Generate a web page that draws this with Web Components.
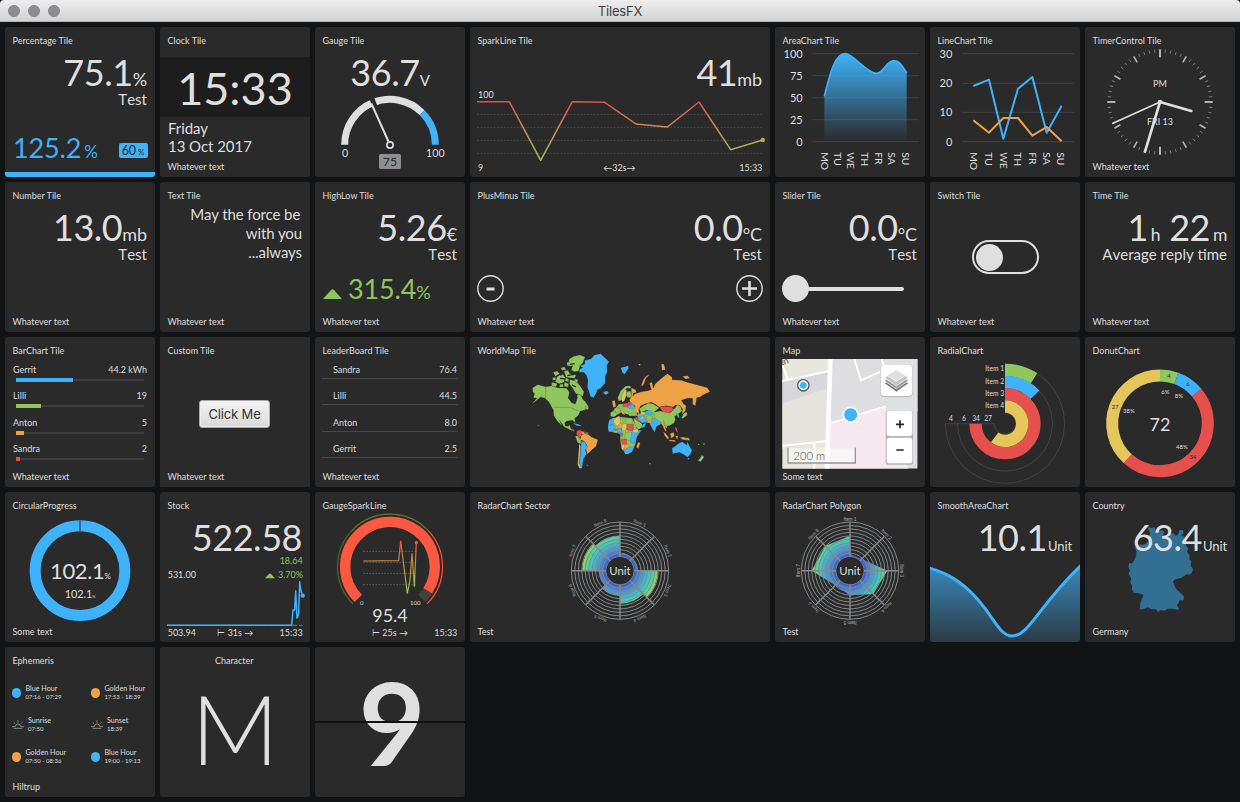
<!DOCTYPE html>
<html lang="en">
<head>
<meta charset="utf-8">
<title>TilesFX</title>
<style>
  html, body { margin: 0; height: 100%; background: #121315; }
  body {
    --fg: #dfdfdf; --tile: #2a2a2a; --blue: #3eb2fb; --green: #8fc65e;
    --orange: #eda245; --red: #e5504c; --yellow: #e5c65a; --gray: #8b9092;
    font-family: Lato, "Open Sans", sans-serif; color: var(--fg); overflow: hidden;
  }
</style>
</head>
<body>
<fx-window caption="TilesFX">
  <fx-tile heading="Percentage Tile"><fx-percentage></fx-percentage></fx-tile>
  <fx-tile heading="Clock Tile" note="Whatever text"><fx-clock></fx-clock></fx-tile>
  <fx-tile heading="Gauge Tile"><fx-gauge></fx-gauge><fx-value class="mid" value="36.7" unit="V" style="--unit:15px"></fx-value></fx-tile>
  <fx-tile heading="SparkLine Tile"><fx-sparkline></fx-sparkline><fx-value value="41" unit="mb"></fx-value></fx-tile>
  <fx-tile heading="AreaChart Tile"><fx-area-chart></fx-area-chart></fx-tile>
  <fx-tile heading="LineChart Tile"><fx-line-chart></fx-line-chart></fx-tile>
  <fx-tile heading="TimerControl Tile" note="Whatever text"><fx-timer></fx-timer></fx-tile>

  <fx-tile heading="Number Tile" note="Whatever text"><fx-value value="13.0" unit="mb" desc="Test"></fx-value></fx-tile>
  <fx-tile heading="Text Tile" note="Whatever text"><fx-prose><span>May the force be&thinsp;</span><span>with you</span><span>...always</span></fx-prose></fx-tile>
  <fx-tile heading="HighLow Tile" note="Whatever text"><fx-value value="5.26" unit="€" desc="Test"></fx-value><fx-trend></fx-trend></fx-tile>
  <fx-tile heading="PlusMinus Tile" note="Whatever text"><fx-value value="0.0" unit="°C" desc="Test"></fx-value><fx-stepper></fx-stepper></fx-tile>
  <fx-tile heading="Slider Tile" note="Whatever text"><fx-value value="0.0" unit="°C" desc="Test"></fx-value><fx-slider></fx-slider></fx-tile>
  <fx-tile heading="Switch Tile" note="Whatever text"><fx-switch></fx-switch></fx-tile>
  <fx-tile heading="Time Tile" note="Whatever text"><fx-duration></fx-duration></fx-tile>

  <fx-tile heading="BarChart Tile" note="Whatever text"><fx-list>
    <fx-bar name="Gerrit" value="44.2 kWh" style="--w:44.4%;--c:var(--blue)"></fx-bar>
    <fx-bar name="Lilli" value="19" style="--w:19.6%;--c:var(--green)"></fx-bar>
    <fx-bar name="Anton" value="5" style="--w:6%;--c:var(--orange)"></fx-bar>
    <fx-bar name="Sandra" value="2" style="--w:2.8%;--c:var(--red)"></fx-bar>
  </fx-list></fx-tile>
  <fx-tile heading="Custom Tile" note="Whatever text" class="square"><fx-button>Click Me</fx-button></fx-tile>
  <fx-tile heading="LeaderBoard Tile" note="Whatever text"><fx-list>
    <fx-leader name="Sandra" value="76.4"></fx-leader>
    <fx-leader name="Lilli" value="44.5"></fx-leader>
    <fx-leader name="Anton" value="8.0"></fx-leader>
    <fx-leader name="Gerrit" value="2.5"></fx-leader>
  </fx-list></fx-tile>
  <fx-tile heading="WorldMap Tile"><fx-world></fx-world></fx-tile>
  <fx-tile heading="Map" note="Some text"><fx-map></fx-map></fx-tile>
  <fx-tile heading="RadialChart"><fx-radial></fx-radial></fx-tile>
  <fx-tile heading="DonutChart"><fx-donut></fx-donut></fx-tile>

  <fx-tile heading="CircularProgress" note="Some text"><fx-progress></fx-progress></fx-tile>
  <fx-tile heading="Stock"><fx-stock></fx-stock><fx-value value="522.58" style="--right:8px"></fx-value></fx-tile>
  <fx-tile heading="GaugeSparkLine"><fx-gauge-spark></fx-gauge-spark></fx-tile>
  <fx-tile heading="RadarChart Sector" note="Test"><fx-radar-sector></fx-radar-sector></fx-tile>
  <fx-tile heading="RadarChart Polygon" note="Test"><fx-radar-polygon></fx-radar-polygon></fx-tile>
  <fx-tile heading="SmoothAreaChart"><fx-smooth></fx-smooth><fx-value value="10.1" unit="Unit" style="--unit:13px;--gap:1px"></fx-value></fx-tile>
  <fx-tile heading="Country" note="Germany"><fx-country></fx-country><fx-value value="63.4" unit="Unit" style="--unit:13px;--gap:1px"></fx-value></fx-tile>

  <fx-tile heading="Ephemeris" note="Hiltrup"><fx-ephemeris>
    <fx-hour name="Blue Hour" time="07:16 - 07:29" kind="blue"></fx-hour>
    <fx-hour name="Golden Hour" time="17:53 - 18:39" kind="orange"></fx-hour>
    <fx-hour name="Sunrise" time="07:50" kind="sun"></fx-hour>
    <fx-hour name="Sunset" time="18:39" kind="sun"></fx-hour>
    <fx-hour name="Golden Hour" time="07:50 - 08:36" kind="orange"></fx-hour>
    <fx-hour name="Blue Hour" time="19:00 - 19:13" kind="blue"></fx-hour>
  </fx-ephemeris></fx-tile>
  <fx-tile heading="Character" class="centered"><fx-character></fx-character></fx-tile>
  <fx-tile><fx-flip></fx-flip></fx-tile>
</fx-window>

<script>
const define = (name, css, html) => customElements.define(name, class extends HTMLElement {
  constructor() {
    super();
    const t = document.createElement('template');
    const body = typeof html === 'function' ? html(k => this.getAttribute(k) || '') : html;
    t.innerHTML = `<style>:host{display:block;box-sizing:border-box}*{box-sizing:border-box}${css}</style>${body}`;
    this.attachShadow({ mode: 'open' }).append(t.content.cloneNode(true));
  }
});
// Drawings use three units per pixel; the box is the tile rectangle in those units.
const chart = (name, x, y, w, markup) => define(name,
  'svg{display:block;width:100%;height:100%}text{fill:var(--fg);font-size:27px}.m{text-anchor:middle}.e{text-anchor:end}',
  `<svg viewBox="${x} ${y} ${w} 450">${markup}</svg>`);
const polar = (cx, cy, r, a) => {
  const t = a * Math.PI / 180;
  return (cx + r * Math.sin(t)).toFixed(2) + ' ' + (cy - r * Math.cos(t)).toFixed(2);
};
const arc = (cx, cy, r, a, b) => `M${polar(cx, cy, r, a)}A${r} ${r} 0 ${b - a > 180 ? 1 : 0} 1 ${polar(cx, cy, r, b)}`;
const ring = (cx, cy, r, a, b, w, c) => `<path d="${arc(cx, cy, r, a, b)}" fill="none" stroke="${c}" stroke-width="${w}"/>`;
const label = (s, x, y, cls = '', extra = '') => `<text x="${x}" y="${y}" class="${cls}" ${extra}>${s}</text>`;

define('fx-window', `
  :host{display:flex;flex-direction:column;width:1240px;height:802px}
  header{height:22px;display:grid;grid-template-columns:1fr auto 1fr;align-items:center;flex:none;
    background:linear-gradient(#eee,#d2d2d2);border-bottom:1px solid #b4b6b8;border-radius:4px 4px 0 0;
    font:13px/20px Inter,"Liberation Sans",sans-serif;letter-spacing:-.2px;color:#404040}
  .dots{display:flex;gap:8px;padding-left:8px}
  i{width:12px;height:12px;border-radius:50%;background:#8f8d92;border:1px solid #858388}
  main{display:grid;padding:5px;gap:5px;grid-template-columns:repeat(3,150px) 300px repeat(3,150px);grid-template-rows:repeat(5,150px)}`,
  a => `<header><div class="dots"><i></i><i></i><i></i></div><span>${a('caption')}</span></header><main><slot></slot></main>`);

define('fx-tile', `
  :host{display:grid;grid-template:minmax(0,1fr)/minmax(0,1fr);background:var(--tile);border-radius:3px;overflow:hidden}
  :host(.square){border-radius:0}
  :host(.centered) .frame{text-align:center;padding-right:9px}
  .frame,::slotted(*){grid-area:1/1}
  .frame{display:flex;flex-direction:column;justify-content:space-between;padding:7.500px 7.500px 5px;font-size:9px;line-height:11px}`,
  a => `<slot></slot><div class="frame"><span>${a('heading')}</span><span>${a('note')}</span></div>`);

define('fx-value', `
  :host{padding:27px var(--right,8px) 0 0;text-align:right}
  :host(.mid){padding-right:0;text-align:center}
  div{font-size:36px;line-height:36px;height:36px;white-space:nowrap;letter-spacing:-.45px}
  small{font-size:var(--unit,18px);line-height:1;margin-left:var(--gap,0);letter-spacing:-.1px}
  p{margin:0;font-size:15px;line-height:18px;font-kerning:none}`,
  a => `<div>${a('value')}<small>${a('unit')}</small></div><p>${a('desc')}</p>`);

define('fx-duration', `
  :host{padding:27px 8px 0 0;text-align:right}
  div{font-size:36px;line-height:36px;height:36px;white-space:nowrap;letter-spacing:-.45px}
  small{font-size:17.500px;line-height:1;margin-left:3px}b{font-weight:400;margin-left:9px}
  p{margin:0;font-size:15px;line-height:18px;font-kerning:none}`,
  `<div>1<small>h</small><b>22</b><small>m</small></div><p>Average reply time</p>`);

define('fx-percentage', `
  :host{display:flex;flex-direction:column}
  fx-value{flex:1}
  .row{display:flex;align-items:center;justify-content:space-between;padding:0 7.500px 9px 8px;color:var(--blue);font-size:27px;line-height:30px;letter-spacing:-.15px}
  small{font-size:17px;line-height:1;margin-left:3px}
  .pill{display:flex;align-items:baseline;background:var(--blue);color:var(--tile);border-radius:2px;height:15px;width:29px;justify-content:center;font-size:12.500px;line-height:15px;margin-top:5px}
  .pill small{font-size:8px;margin-left:2px}
  .bar{height:5.500px;background:var(--blue)}`,
  `<fx-value value="75.1" unit="%" desc="Test"></fx-value>
   <div class="row"><span>125.2<small>%</small></span><span class="pill">60<small>%</small></span></div><div class="bar"></div>`);

define('fx-clock', `
  .band{margin-top:30px;height:60px;background:#1d1d1d;text-align:center;font-size:45px;line-height:62px}
  p{margin:0;padding:2px 8px;font-size:15px;line-height:18px;letter-spacing:-.05px}`,
  `<div class="band">15:33</div><p>Friday<br>13 Oct 2017</p>`);

define('fx-prose', `:host{display:flex;flex-direction:column;align-items:flex-end;padding:23px 8px 0 0;font-size:15px;line-height:19px;letter-spacing:-.1px;white-space:pre}`, `<slot></slot>`);

define('fx-trend', `
  :host{display:flex;align-items:baseline;gap:6px;padding:91px 0 0 8px;color:var(--green);font-size:27px;line-height:32px;letter-spacing:-.15px}
  svg{width:19px;height:10px}small{font-size:18px;line-height:1}`,
  `<svg viewBox="0 0 19 10"><path d="M0 10 8 1q1.500-1.500 3 0l8 9z" fill="currentColor"/></svg><span>315.4<small>%</small></span>`);

define('fx-stepper', `
  :host{display:flex;justify-content:space-between;align-items:flex-start;padding:93px 7px 0}
  svg{width:27px;height:27px;display:block}`,
  ['<path d="M9.500 14h8"/>', '<path d="M6 13.500h15M13.500 6v15"/>'].map((p, i) =>
  `<svg viewBox="0 0 27 27" fill="none" stroke="#dfdfdf"><circle cx="13.500" cy="13.500" r="12.700" stroke-width="1.400"/><g stroke-width="${i ? 2.6 : 3}">${p}</g></svg>`).join(''));

define('fx-slider', `
  :host{display:flex;align-items:center;padding:93px 21px 0 7px;height:120px}
  i{width:27px;height:27px;border-radius:50%;background:var(--fg)}
  b{flex:1;height:4px;background:var(--fg);border-radius:0 2px 2px 0;margin-left:-1px}`, `<i></i><b></b>`);

define('fx-switch', `
  :host{display:grid;place-items:center}
  div{width:67px;height:34px;border:2px solid var(--fg);border-radius:17px;padding:2px;display:flex;align-items:center}
  i{width:27px;height:27px;border-radius:50%;background:var(--fg)}`, `<div><i></i></div>`);

define('fx-list', `:host{display:flex;flex-direction:column;padding:27px 8px 0}`, `<slot></slot>`);
define('fx-bar', `
  :host{height:26.300px;font-size:9px;line-height:11px}
  p{display:flex;justify-content:space-between;margin:0 0 3px}
  .t{height:4px;margin:0 3px;background:linear-gradient(#3e3e3e,#3e3e3e) 0 1px/100% 2px no-repeat}
  .t i{display:block;height:4px;width:var(--w);background:var(--c)}`,
  a => `<p><span>${a('name')}</span><span>${a('value')}</span></p><div class="t"><i></i></div>`);
define('fx-leader', `
  :host{height:26.300px;font-size:9px;line-height:11px}
  p{display:flex;justify-content:space-between;margin:0 -1px;padding:0 1px 3px 11px;border-bottom:1px solid #484848}`,
  a => `<p><span>${a('name')}</span><span>${a('value')}</span></p>`);

define('fx-button', `
  :host{display:grid;place-items:center;padding:3px 1px 0 0}
  span{display:grid;place-items:center;width:71px;height:28px;border:1px solid #aaa;border-radius:3px;
   background:linear-gradient(#f4f4f4,#d9d9d9);box-shadow:inset 0 0 0 1px #eee;color:#333;font:13px Inter,"Liberation Sans",sans-serif;letter-spacing:-.15px}`,
  `<span><slot></slot></span>`);

define('fx-ephemeris', `:host{display:grid;grid-template-columns:79px 1fr;grid-auto-rows:32px;align-content:start;padding:38px 0 0 7px}`, `<slot></slot>`);
define('fx-hour', `
  :host{display:flex;gap:4px;font-size:7.200px;line-height:8px;white-space:nowrap}
  i{width:9.400px;height:9.400px;border-radius:50%;margin-top:3.300px;flex:none}
  svg{width:12px;height:10px;margin-top:3px;flex:none}
  div{display:flex;flex-direction:column}small{font-size:6px;line-height:8px}`,
  a => (a('kind') === 'sun'
    ? `<svg viewBox="0 0 36 30" fill="none" stroke="#b9b9b9" stroke-width="2"><path d="M0 20h9M27 20h9M5 25h26M10 20a8 8 0 1 1 16 0M18 8V1M9 11 5 7M27 11l4-4"/></svg>`
    : `<i style="background:var(--${a('kind')})"></i>`) + `<div><span>${a('name')}</span><small>${a('time')}</small></div>`);

define('fx-character', `:host{text-align:center;font-size:97px;font-weight:300;line-height:116px;padding-top:23px}`, `M`);
define('fx-flip', `
  :host{display:grid;grid-template:150px/150px}
  span{grid-area:1/1;text-align:center;font-size:115px;font-weight:700;line-height:148px;padding-left:4px;height:150px}
  i{grid-area:1/1;align-self:start;margin-top:74px;height:2px;background:#111}`, `<span>9</span><i></i>`);

chart('fx-gauge', 9, 21, 450,
  ring(234, 374, 136, -90, 45, 21, '#dfdfdf') + ring(234, 374, 136, 45, 90, 21, 'var(--blue)') +
  `<path d="M216 334 176 225" stroke="#2a2a2a" stroke-width="15"/><path d="M230 366 178 250" stroke="#dfdfdf" stroke-width="6"/>
   <circle cx="234" cy="375" r="9.500" fill="#2a2a2a" stroke="#dfdfdf" stroke-width="5"/>
   <rect x="201" y="402" width="66" height="45" rx="5" fill="#8b9092"/>` +
  label('0', 99, 410, 'm', 'style="font-size:32px"') + label('100', 370, 410, 'm', 'style="font-size:32px"') +
  label('75', 234, 438, 'm', 'style="font-size:37px;fill:#2a2a2a"'));

chart('fx-sparkline', 474, 21, 900,
  `<defs><linearGradient id="g" gradientUnits="userSpaceOnUse" x1="0" y1="245" x2="0" y2="421"><stop offset="0" stop-color="#e5504c"/><stop offset=".4" stop-color="#cf874d"/><stop offset="1" stop-color="#8fc65e"/></linearGradient></defs>
   <path d="M495 283H1350M495 322H1350M495 361H1350M495 400H1350" stroke="#4d4d4d" stroke-width="2.500" stroke-dasharray="6 4"/>
   <path d="M495 245 592 245.100 686 421 781 245 878 247 972 312 1066 321 1161 246 1256 389 1352 360" fill="none" stroke="url(#g)" stroke-width="4.500" stroke-linejoin="round"/>
   <circle cx="1352" cy="360" r="7" fill="#b8ab57"/>` +
  label('100', 498, 233) + label('9', 498, 452) + label('←32s→', 922, 452, 'm') + label('15:33', 1351, 452, 'e'));

const days = ['MO', 'TU', 'WE', 'TH', 'FR', 'SA', 'SU'];
const axis = (x0, x1, ys, names, tx, xs) =>
  ys.map(y => `<path d="M${x0} ${y}H${x1}" stroke="#3c3c3c" stroke-width="4"/>`).join('') +
  names.map((n, i) => label(n, tx, ys[i] + 12, 'e', 'style="font-size:33px"')).join('') +
  xs.map((x, i) => label(days[i], 0, 0, '', `transform="translate(${x - 11} 397) rotate(90)" style="font-size:31px;letter-spacing:-.5px"`)).join('');
const areaCurve = 'M163 229C180 160 195 101 225 101C250 101 290 160 320 160C340 160 350 122 371 122C390 122 398 140 410 159';
chart('fx-area-chart', 15, 21, 450,
  `<defs><linearGradient id="g" x1="0" y1="0" x2="0" y2="1"><stop offset="0" stop-color="#3eb2fb"/><stop offset="1" stop-color="#3eb2fb" stop-opacity="0"/></linearGradient></defs>` +
  axis(127, 447, [101, 167, 233, 299, 365], ['100', '75', '50', '25', '0'], 98, [163, 204, 243, 285, 327, 366, 408]) +
  `<path d="${areaCurve}V365H163Z" fill="url(#g)"/><path d="${areaCurve}" fill="none" stroke="#3eb2fb" stroke-width="5"/>`);
chart('fx-line-chart', 480, 21, 450,
  axis(577, 911, [101, 190, 277, 365], ['30', '20', '10', '0'], 547, [612, 656, 700, 744, 787, 830, 873]) +
  `<g fill="none" stroke-width="6" stroke-linejoin="round"><path stroke="#3eb2fb" d="M610 198 657 179 700 356 744 206 787 171 830 338 875 257"/>
   <path stroke="#eda245" d="M610 301 657 338 700 294 744 294 787 347 830 321 875 364"/></g>`);

let ticks = '';
for (let i = 0; i < 60; i++) {
  const q = i % 15 === 0, h = i % 5 === 0;
  ticks += `<path d="M${polar(1170, 246, 158, i * 6)}L${polar(1170, 246, q ? 134 : h ? 137 : 148, i * 6)}" stroke="${h ? '#b4b4b4' : '#8d8d8d'}" stroke-width="${q ? 6 : h ? 5 : 2.5}"/>`;
}
chart('fx-timer', 945, 21, 450, ticks + label('PM', 1170, 200, 'm') + label('FRI 13', 1170, 314, 'm') +
  `<g stroke="#dfdfdf" stroke-linecap="round"><path d="M1170 246 1264 273" stroke-width="8"/><path d="M1170 246 1125 395" stroke-width="8"/><path d="M1170 246 1029 310" stroke-width="5"/></g><circle cx="1170" cy="246" r="7" fill="#dfdfdf"/>`);

const under = [
  'M428 250 450 246 486 250 496 268 502 286 514 286 500 306 496 328 484 352 466 358 460 344 452 326 450 296 428 292 414 286 414 270Z',
  'M432 226 446 208 484 204 504 226 500 240 482 240 466 236 454 232 436 242 422 244 424 232Z',
  'M500 240 520 230 600 232 614 258 590 274 576 264 556 276 540 264 524 262 508 250Z'
];
const lands = {
  '#8fc65e': [
    'M188 158 203 149 227 155 245 153 262 158 290 160 298 172 295 188 305 203 316 208 322 190 322 176 334 182 338 193 346 200 356 215 345 224 330 229 326 240 314 250 316 264 308 256 290 258 284 264 286 273 295 274 299 269 302 280 310 288 300 284 282 275 268 255 276 273 262 258 252 243 250 225 244 214 236 200 225 190 212 186 193 202 186 206 201 190 190 188 194 176 188 170Z',
    'M298 72 312 64 330 60 345 66 338 84 330 92 326 108 312 110 304 104 308 92 294 94Z', 'M300 134 318 138 330 152 342 170 338 184 326 178 318 176 308 160 298 146Z',
    'M262 124 278 118 286 128 282 142 268 146 256 140Z', 'M250 112 262 108 268 116 256 124Z', 'M282 108 294 106 300 116 318 120 314 130 298 128 288 126Z', 'M284 142 296 146 294 156 282 154ZM272 98 284 96 288 104 276 106ZM346 214 356 216 354 224 346 222Z',
    'M248 128 256 126 258 134 248 136ZM290 84 298 78 300 88 292 92ZM246 142 262 146 258 156 244 152ZM286 128 296 132 296 140 286 138ZM270 148 280 148 280 156 268 156ZM314 132 324 134 322 142 314 140Z',
    'M316 303 324 303 333 315 332 328 322 322Z', 'M443 188 452 168 466 154 480 152 484 160 470 160 458 178 454 196 446 198Z', 'M422 232 436 230 440 240 432 246 422 244ZM434 220 446 218 452 228 444 234 432 230Z', 'M446 207 456 208 457 220 448 220Z',
    'M475 236 498 234 502 242 478 243Z', 'M450 252 462 250 462 270 450 266ZM466 252 486 250 488 268 468 268Z', 'M490 250 500 252 516 266 518 276 504 284 496 272Z', 'M466 292 484 292 490 306 482 320 464 312Z',
    'M507 222 520 212 536 204 548 206 558 212 568 218 556 228 548 234 530 226 514 232Z',
    'M556 230 572 228 600 234 616 218 622 208 632 216 636 228 624 238 614 244 616 254 612 264 598 272 584 272 574 262 556 256 552 242Z',
    'M530 244 544 240 548 250 536 260 530 256ZM640 236 650 230 652 240 640 250 634 250ZM644 308 656 308 660 316 646 316ZM696 360 702 366 692 380 684 378Z', 'M470 170 482 168 484 186 474 188 468 182Z'
  ],
  '#eda245': [
    'M484 158 496 164 500 172 490 174 488 184 496 176 514 170 530 168 544 164 538 144 546 142 550 160 556 146 572 132 592 116 606 126 606 134 634 136 646 140 682 150 712 158 720 170 702 178 690 186 680 188 676 212 668 208 668 190 652 190 634 196 640 206 648 212 646 228 636 238 638 222 628 210 616 210 610 216 588 212 568 216 556 208 544 202 526 206 512 212 506 224 508 236 498 232 488 226 496 214 482 204 478 196 484 182Z',
    'M514 150 520 134 528 124 540 118 528 130 522 146 516 154ZM574 86 582 88 586 104 576 106ZM638 124 652 122 660 130 646 132ZM504 88 512 86 510 93Z',
    'M334 300 344 294 354 298 364 306 384 314 378 334 366 344 352 358 348 342 352 334 342 318 330 314Z', 'M426 198 434 196 438 214 430 218ZM450 226 458 226 466 240 458 238Z',
    'M430 284 446 284 444 292 432 292ZM446 262 458 268 456 284 442 278ZM460 328 472 326 480 336 470 342 462 346Z', 'M504 322 511 324 505 341 499 336Z', 'M530 262 548 248 552 256 544 266Z',
    'M570 262 580 264 586 276 590 290 584 286 578 272ZM580 290 588 296 598 310 592 312 584 302ZM600 296 610 292 614 302 604 310ZM616 304 624 302 622 314ZM628 308 642 306 654 314 640 314ZM596 314 616 316 616 320 598 318Z', 'M330 288 344 290 342 298 332 296Z'
  ],
  '#3eb2fb': [
    'M345 76 362 72 374 60 392 56 402 66 417 80 410 92 412 110 406 122 405 145 392 160 382 164 378 176 370 188 362 185 357 170 352 156 354 136 350 122 342 112 328 112 328 104 338 98 330 92 344 88Z',
    'M401 170 413 168 416 174 408 179 401 176Z', 'M452 98 462 96 474 92 476 100 464 118 458 114Z', 'M334 318 344 320 352 336 346 346 350 356 340 372 336 400 330 398 328 382 332 352Z',
    'M418 254 428 250 432 262 424 272 414 270ZM414 272 430 266 438 278 428 290 416 290ZM440 282 454 280 456 294 442 294Z', 'M462 344 480 336 494 334 486 350 474 358 464 354Z', 'M486 286 512 286 500 306 494 326 480 322 484 304Z',
    'M502 244 524 242 530 262 516 264 504 254ZM524 230 540 226 550 238 534 240 522 236ZM468 206 490 208 496 220 478 222Z',
    'M546 252 556 250 572 262 572 268 560 274 554 292 546 280 540 268Z', 'M606 340 616 334 624 326 636 320 642 324 650 330 652 320 660 336 666 346 660 360 652 366 640 358 628 352 608 356ZM652 368 658 370 655 375ZM618 236 626 236 628 248 624 248Z', 'M308 264 326 268 336 274 320 272Z', 'M520 266 528 264 524 276 512 280Z'
  ],
  '#e5504c': ['M568 216 584 214 606 216 612 224 596 234 578 230Z', 'M320 288 332 284 336 300 328 308 320 300Z', 'M344 292 356 292 352 300ZM305 280 314 286 310 290Z', 'M470 268 490 268 492 284 480 288 470 284Z', 'M454 312 470 312 470 328 456 328Z', 'M458 208 472 204 474 216 460 216Z', 'M496 244 508 254 506 260 496 254ZM430 282 440 284 436 288ZM450 296 458 294 458 304 452 304Z', 'M614 276 620 278 624 294 618 288Z', 'M474 200 484 202 482 212 474 210Z', 'M500 234 510 234 510 238Z'],
  '#e5c65a': ['M432 252 448 242 452 262 442 274 430 262Z', 'M456 268 470 266 468 286 456 288Z', 'M454 330 464 328 460 348 454 340Z', 'M328 324 332 334 331 354 327 384 334 400 328 400 323 388 326 350Z', 'M456 180 464 164 470 166 468 184 464 196 458 202 454 194Z', 'M512 228 526 234 524 240 512 238ZM488 284 504 282 504 294 490 292ZM580 256 586 268 592 276 588 280ZM468 284 476 288 466 292Z', 'M510 250 518 244 522 248 514 254Z']
};
chart('fx-world', 0, 6, 900, `<path fill="#8fc65e" d="${under.join('')}"/>` + Object.entries(lands).map(([c, p]) =>
  `<path fill="${c}" stroke="#2a2a2a" stroke-opacity=".4" stroke-width="1.200" stroke-linejoin="round" d="${p.join('')}"/>`).join('') +
  `<path d="M227 155V190M252 217H300L326 228" stroke="#2a2a2a" stroke-opacity=".5" stroke-width="1.500" fill="none"/>
   <g stroke="#2a2a2a" stroke-width="4" fill="none"><path d="M292 122 312 118M270 130 286 132M306 150 318 156M300 88 314 86M272 112V122"/></g>
   <path d="M294 188 306 178 318 186 314 204 304 202Z" fill="#2a2a2a"/>
   <g fill="#8fc65e"><circle cx="686" cy="328" r="2"/><circle cx="702" cy="327" r="2"/><circle cx="540" cy="386" r="2"/></g><path d="M203 270l4 3M350 390l4 2" stroke="#3eb2fb" stroke-width="2"/>`);

chart('fx-map', 0, 6, 450,
  `<defs><clipPath id="c"><rect x="22" y="72" width="406" height="329"/></clipPath></defs><g clip-path="url(#c)">
   <rect x="22" y="72" width="406" height="329" fill="#dedddf"/>
   <path d="M22 72H168L150 401H22Z" fill="#e8e7dc"/><path d="M22 136 162 108 158 160 22 206Z" fill="#d7d7dc"/>
   <path d="M22 206 158 160 152 320 22 342Z" fill="#e5e3dc"/>
   <path d="M164 266 332 212 340 250 400 401H160Z" fill="#f5e8ef"/><path d="M330 72H428V230H335Z" fill="#dfe0e4"/>
   <path d="M168 72 155 401M238 72 258 136 330 104 320 72M162 266 332 214M22 138 164 108M22 332 160 318M38 132 22 90M118 320V401" fill="none" stroke="#fff" stroke-width="6"/>
   <path d="M166 72 156 401" stroke="#fff" stroke-width="14"/>
   <text x="14" y="94" transform="rotate(-18 14 94)" style="font-size:28px;fill:#5d4d45">en</text>
   <circle cx="85" cy="151" r="17" fill="#f7f7f7" stroke="#555a60" stroke-width="4"/><circle cx="85" cy="151" r="10" fill="#3eb2fb"/>
   <circle cx="227" cy="239" r="22" fill="#3eb2fb" stroke="#fff" stroke-width="5"/>
   <rect x="315" y="89" width="99" height="98" rx="13" fill="#bdbdc0"/><rect x="317" y="89" width="95" height="94" rx="12" fill="#fff"/>
   <g stroke="#fff" stroke-width="2"><path d="M364 122 401 145 364 171 328 145Z" fill="#777"/><path d="M364 114 401 137 364 162 328 137Z" fill="#999"/><path d="M364 106 401 128 364 153 328 128Z" fill="#c4c4c4"/><path d="M364 104 392 121 364 139 336 121Z" fill="#e0e0e0"/></g>
   <rect x="332" y="227" width="82" height="162" rx="8" fill="#b5b4b7"/><rect x="335" y="227" width="77" height="76" rx="8" fill="#fff"/><rect x="335" y="308" width="77" height="77" rx="8" fill="#fff"/>
   <path d="M363 268H387M375 256V280M364 345H386" stroke="#222" stroke-width="5"/>
   <rect x="39" y="340" width="202" height="44" fill="#fff" opacity=".5"/><path d="M39 338V384H241V338" fill="none" stroke="#969696" stroke-width="4"/>
   <text x="55" y="374" style="font-size:34px;font-weight:300;fill:#555">200 m</text></g>`);

const C8 = [690, 266];
chart('fx-radial', 465, 6, 450,
  `<g>${[179, 142.5].map(r => ring(...C8, r, 0, 270, 3, '#434343')).join('')}${ring(...C8, 32, 0, 270, 3, '#434343')}<path d="M510 266H659" stroke="#434343" stroke-width="3"/></g>` +
  ring(...C8, 161.5, 0, 32.6, 37, 'var(--green)') + ring(...C8, 125, 0, 46, 37, 'var(--blue)') +
  ring(...C8, 88.5, 0, 270, 37, 'var(--red)') + ring(...C8, 51.5, 0, 217, 37, 'var(--yellow)') +
  [108, 147, 183, 219].map((y, i) => label('Item ' + (i + 1), 687, y, 'e', 'style="font-size:20px"')).join('') +
  [[528, 4], [567, 6], [603, 34], [639, 27]].map(([x, s]) => label(s, x, 259, 'm', 'style="font-size:20px"')).join(''));

const C9 = [1155, 265];
chart('fx-donut', 930, 6, 450,
  ring(...C9, 143.5, 0, 20, 36, 'var(--green)') + ring(...C9, 143.5, 20, 50, 36, 'var(--blue)') +
  ring(...C9, 143.5, 50, 222.4, 36, 'var(--red)') + ring(...C9, 143.5, 222.4, 360, 36, 'var(--yellow)') +
  [[4, 1182, 129], [6, 1239, 154], [34, 1254, 373], [27, 1021, 221]].map(([s, x, y]) => label(s, x, y, 'm', 'style="font-size:18px;fill:#2a2a2a"')).join('') +
  [['6%', 1171, 176], ['8%', 1212, 190], ['38%', 1062, 235], ['48%', 1221, 343]].map(([s, x, y]) => label(s, x, y, 'm', 'style="font-size:18px"')).join('') +
  label('72', 1155, 287, 'm', 'style="font-size:54px"'));

chart('fx-progress', 15, 6, 450,
  `<circle cx="240" cy="242" r="134.500" fill="none" stroke="#3eb2fb" stroke-width="33"/><path d="M240 91V125" stroke="#3c6683" stroke-width="6"/>` +
  `<text x="241" y="266" class="m" style="font-size:66px;letter-spacing:-1px">102.1<tspan style="font-size:24px">%</tspan></text>` +
  `<text x="240" y="324" class="m" style="font-size:33px;letter-spacing:-.5px">102.1<tspan style="font-size:12px">%</tspan></text>`);

chart('fx-stock', 480, 6, 450,
  `<path d="M501 406H908" stroke="#8a8a8a" stroke-width="2.500" stroke-dasharray="12 6"/>
   <path d="M501 406H875L879 360H884L887 302 891 385 896 372 899 275 903 303 908 317" fill="none" stroke="#3eb2fb" stroke-width="4.500" stroke-linejoin="round"/>
   <circle cx="908" cy="317" r="6.500" fill="#3eb2fb"/><path d="M795 265 807 252q3-3 6 0l12 13z" fill="#8fc65e"/>` +
  label('18.64', 908, 223, 'e', 'style="fill:var(--green)"') + label('3.70%', 909, 265, 'e', 'style="fill:var(--green)"') +
  label('531.00', 503, 263) + label('503.94', 503, 437) + label('⊢ 31s →', 706, 437, 'm') + label('15:33', 908, 437, 'e'));

const CG = [1170, 230];
chart('fx-gauge-spark', 945, 6, 450,
  `<defs><linearGradient id="g" gradientUnits="userSpaceOnUse" x1="0" y1="150" x2="0" y2="311"><stop offset="0" stop-color="#ff5438"/><stop offset=".4" stop-color="#c98a3c"/><stop offset="1" stop-color="#8fd04c"/></linearGradient></defs>` +
  ring(...CG, 157.5, -135, -47, 3.5, '#467021') + ring(...CG, 157.5, -47, 46, 3.5, '#76722a') + ring(...CG, 157.5, 46, 135, 3.5, '#ff5438') +
  ring(...CG, 134.5, -135, 135, 31, '#414141') + ring(...CG, 134.5, -135, 122.6, 31, '#ff5740') +
  `<path d="M1090 184H1250M1090 217H1250M1090 250H1250M1090 284H1250" stroke="#777" stroke-width="2" stroke-dasharray="5 4"/>
   <path d="M1090 213 1196 212 1202 152 1222 311 1230 270 1236 190 1243 290 1249 158" fill="none" stroke="url(#g)" stroke-width="3.500"/><circle cx="1249" cy="158" r="5" fill="#ff5438"/>` +
  label('0', 1085, 344, 'm', 'style="font-size:18px"') + label('100', 1246, 344, 'm', 'style="font-size:18px"') +
  label('95.4', 1170, 397, 'm', 'style="font-size:54px"') + label('⊢ 25s →', 1170, 437, 'm') + label('15:33', 1372, 437, 'e'));

const radar = (cx, cy, shape, offset) => {
  let s = `<defs><radialGradient id="g" gradientUnits="userSpaceOnUse" cx="${cx}" cy="${cy}" r="146"><stop offset=".29" stop-color="#3c5cc8"/><stop offset=".45" stop-color="#4a96d4"/><stop offset=".6" stop-color="#3cc8c4"/><stop offset=".7" stop-color="#5bd38c"/><stop offset=".78" stop-color="#94dd50"/></radialGradient></defs><path d="${shape}" fill="url(#g)"/>`;
  for (let i = 0; i <= 10; i++) s += `<circle cx="${cx}" cy="${cy}" r="${42 + i * 10.4}" fill="none" stroke="#85898b" stroke-width="3"/>`;
  for (let i = 0; i < 8; i++) {
    s += `<path d="M${polar(cx, cy, 42, i * 45)}L${polar(cx, cy, 146, i * 45)}" stroke="#85898b" stroke-width="4.500"/>`;
    s += label('Item ' + (i + 1), 0, 0, 'm', `transform="translate(${polar(cx, cy, 150, i * 45 + offset)}) rotate(${i * 45 + offset})" style="font-size:14px;fill:#aaa"`);
  }
  return s + `<circle cx="${cx}" cy="${cy}" r="41" fill="#2a2a2a"/>` + label('Unit', cx, cy + 12, 'm', 'style="font-size:34px"');
};
const sectors = [52, 52, 113, 99, 76, 62, 113, 105].map((r, i) => `M240 242L${polar(240, 242, r, i * 45)}A${r} ${r} 0 0 1 ${polar(240, 242, r, i * 45 + 45)}Z`).join('');
chart('fx-radar-sector', -210, 6, 900, radar(240, 242, sectors, 22.5));
const poly = [[51, 0], [50, 45], [112, 90], [99, 135], [74, 180], [62, 225], [115, 270], [105, 315], [105, 360]].map(([r, a]) => polar(930, 242, r, a)).join('L');
chart('fx-radar-polygon', 705, 6, 450, radar(930, 242, 'M' + poly + 'Z', 0));

const smooth = 'M12 234C80 252 130 290 180 355C212 398 230 438 262 438C312 438 340 348 468 226';
chart('fx-smooth', 15, 6, 450,
  `<defs><linearGradient id="g" x1="0" y1="0" x2="0" y2="1"><stop offset="0" stop-color="#3eb2fb" stop-opacity=".7"/><stop offset="1" stop-color="#3eb2fb" stop-opacity=".12"/></linearGradient></defs>
   <path d="${smooth}V458H12Z" fill="url(#g)"/><path d="${smooth}" fill="none" stroke="#3eb2fb" stroke-width="9"/>`);

chart('fx-country', 480, 6, 450,
  `<path fill="#336f92" d="M668 112 680 114 688 112 692 120 704 124 712 120 718 126 714 134 724 138 732 132 746 130 752 138 760 132 764 120 774 120 776 130 768 136 778 140 784 152 782 166 790 176 786 184 794 198 793 208 799 214 797 228 804 238 800 250 792 254 786 252 768 264 752 268 744 274 748 286 754 298 766 308 778 320 774 332 764 330 760 340 756 346 762 356 758 360 742 356 728 356 718 362 706 360 700 366 692 358 680 358 668 352 656 358 644 358 646 340 650 328 656 314 640 310 626 308 620 296 622 288 616 278 618 264 610 250 616 242 610 232 612 220 622 220 628 210 634 196 634 182 630 172 640 164 654 164 664 160 672 152 668 138 676 132Z"/>`);
</script>
</body>
</html>
